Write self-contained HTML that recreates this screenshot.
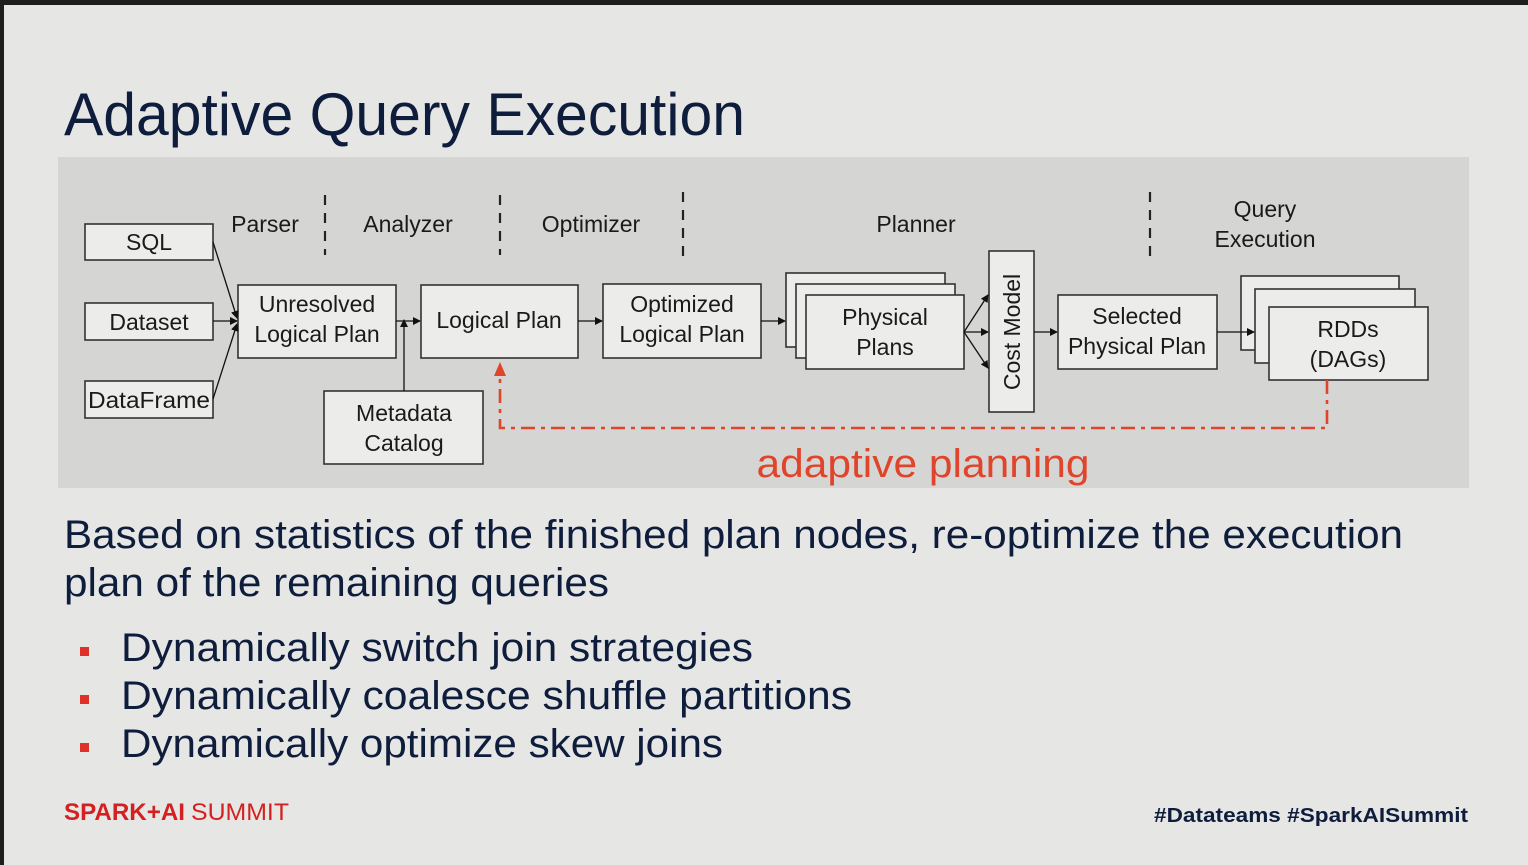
<!DOCTYPE html>
<html><head><meta charset="utf-8"><style>
html,body{margin:0;padding:0;background:#1e1e1e;}
svg{display:block}
</style></head><body>
<svg width="1528" height="865" viewBox="0 0 1528 865" xmlns="http://www.w3.org/2000/svg" font-family="Liberation Sans, sans-serif">
<defs><marker id="ah" markerWidth="8" markerHeight="8" refX="7" refY="4" orient="auto" markerUnits="userSpaceOnUse"><path d="M0,0 L8,4 L0,8 z" fill="#111"/></marker></defs>
<rect x="0" y="0" width="1528" height="865" fill="#1e1e1e"/>
<rect x="4" y="5" width="1524" height="860" fill="#e6e7e5"/>
<text x="64" y="135" font-size="60" fill="#0f1d3d" textLength="681" lengthAdjust="spacingAndGlyphs">Adaptive Query Execution</text>
<rect x="58" y="157" width="1411" height="331" fill="#d5d5d4"/>
<g fill="#ececea" stroke="#333" stroke-width="1.6">
<rect x="85" y="224" width="128" height="36"/>
<rect x="85" y="303" width="128" height="37"/>
<rect x="85" y="381" width="128" height="37"/>
<rect x="238" y="285" width="158" height="73"/>
<rect x="421" y="285" width="157" height="73"/>
<rect x="603" y="284" width="158" height="74"/>
<rect x="324" y="391" width="159" height="73"/>
<rect x="786" y="273" width="159" height="74"/>
<rect x="796" y="284" width="159" height="74"/>
<rect x="806" y="295" width="158" height="74"/>
<rect x="989" y="251" width="45" height="161"/>
<rect x="1058" y="295" width="159" height="74"/>
<rect x="1241" y="276" width="158" height="74"/>
<rect x="1255" y="289" width="160" height="74"/>
<rect x="1269" y="307" width="159" height="73"/>
</g>
<g stroke="#111" stroke-width="1.3" fill="none">
<line x1="213" y1="242" x2="237" y2="318" marker-end="url(#ah)"/>
<line x1="213" y1="321" x2="237" y2="321" marker-end="url(#ah)"/>
<line x1="213" y1="399" x2="237" y2="324" marker-end="url(#ah)"/>
<line x1="396" y1="321" x2="420" y2="321" marker-end="url(#ah)"/>
<line x1="404" y1="391" x2="404" y2="320" marker-end="url(#ah)"/>
<line x1="578" y1="321" x2="602" y2="321" marker-end="url(#ah)"/>
<line x1="761" y1="321" x2="785" y2="321" marker-end="url(#ah)"/>
<line x1="964" y1="332" x2="988" y2="295" marker-end="url(#ah)"/>
<line x1="964" y1="332" x2="988" y2="332" marker-end="url(#ah)"/>
<line x1="964" y1="332" x2="988" y2="368" marker-end="url(#ah)"/>
<line x1="1034" y1="332" x2="1057" y2="332" marker-end="url(#ah)"/>
<line x1="1217" y1="332" x2="1254" y2="332" marker-end="url(#ah)"/>
</g>
<g stroke="#222" stroke-width="2.2" stroke-dasharray="10,8">
<line x1="325" y1="195" x2="325" y2="255"/>
<line x1="500" y1="195" x2="500" y2="255"/>
<line x1="683" y1="192" x2="683" y2="258"/>
<line x1="1150" y1="192" x2="1150" y2="258"/>
</g>
<g font-size="23" fill="#1a1a1a" text-anchor="middle">
<text x="265" y="232">Parser</text>
<text x="408" y="232">Analyzer</text>
<text x="591" y="232">Optimizer</text>
<text x="916" y="232">Planner</text>
<text x="1265" y="217">Query</text>
<text x="1265" y="247">Execution</text>
<text x="149" y="250">SQL</text>
<text x="149" y="330">Dataset</text>
<text x="149" y="408" textLength="122" lengthAdjust="spacingAndGlyphs">DataFrame</text>
<text x="317" y="312">Unresolved</text>
<text x="317" y="342">Logical Plan</text>
<text x="499" y="328">Logical Plan</text>
<text x="682" y="312">Optimized</text>
<text x="682" y="342">Logical Plan</text>
<text x="404" y="421">Metadata</text>
<text x="404" y="451">Catalog</text>
<text x="885" y="325">Physical</text>
<text x="885" y="355">Plans</text>
<text x="1137" y="324">Selected</text>
<text x="1137" y="354">Physical Plan</text>
<text x="1348" y="337">RDDs</text>
<text x="1348" y="367">(DAGs)</text>
<text transform="translate(1020,332) rotate(-90)">Cost Model</text>
</g>
<g stroke="#e0442a" stroke-width="2.6" fill="none" stroke-dasharray="14,6,4,6">
<polyline points="1327,380 1327,428 500,428 500,374"/>
</g>
<path d="M494,376 L500,362 L506,376 z" fill="#e0442a"/>
<text x="923" y="477" font-size="40" fill="#e0442a" text-anchor="middle" textLength="333" lengthAdjust="spacingAndGlyphs">adaptive planning</text>
<g fill="#0f1d3d" font-size="40">
<text x="64" y="548" textLength="1339" lengthAdjust="spacingAndGlyphs">Based on statistics of the finished plan nodes, re-optimize the execution</text>
<text x="64" y="596" textLength="545" lengthAdjust="spacingAndGlyphs">plan of the remaining queries</text>
<text x="121" y="661" textLength="632" lengthAdjust="spacingAndGlyphs">Dynamically switch join strategies</text>
<text x="121" y="709" textLength="731" lengthAdjust="spacingAndGlyphs">Dynamically coalesce shuffle partitions</text>
<text x="121" y="757" textLength="602" lengthAdjust="spacingAndGlyphs">Dynamically optimize skew joins</text>
</g>
<g fill="#e0302a">
<rect x="80" y="647" width="9" height="9"/>
<rect x="80" y="695" width="9" height="9"/>
<rect x="80" y="743" width="9" height="9"/>
</g>
<text x="64" y="820" font-size="24" fill="#d42020"><tspan font-weight="bold" textLength="121" lengthAdjust="spacingAndGlyphs">SPARK+AI</tspan><tspan dx="6" textLength="98" lengthAdjust="spacingAndGlyphs">SUMMIT</tspan></text>
<text x="1154" y="822" font-size="20" font-weight="bold" fill="#0f1d3d" textLength="314" lengthAdjust="spacingAndGlyphs">#Datateams  #SparkAISummit</text>
</svg>
</body></html>
